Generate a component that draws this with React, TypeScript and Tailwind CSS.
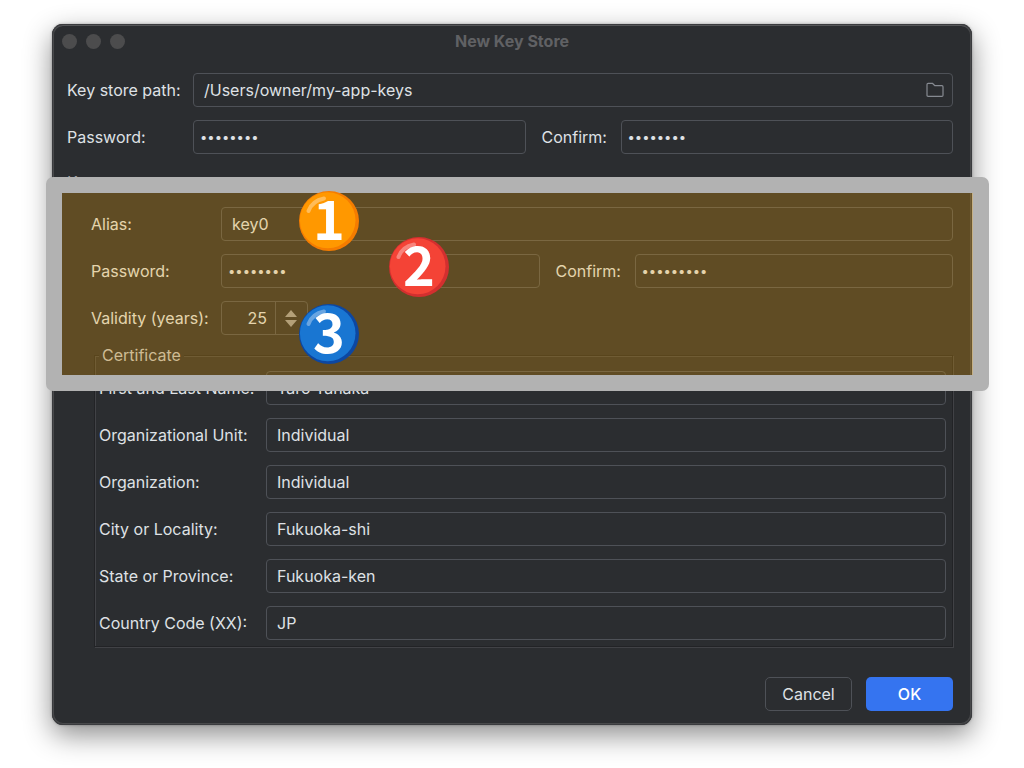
import { useId } from "react";

const inputClass =
  "h-[34px] w-full min-w-0 rounded-[4px] border border-[#4e5157] bg-transparent pl-[10px] text-base text-[#dfe1e5] outline-none";

const passwordClass =
  "h-[34px] w-full min-w-0 rounded-[4px] border border-[#4e5157] bg-transparent pl-[6px] text-[13px] text-[#dfe1e5] outline-none";

function PasswordPair({
  labelWidth,
  first,
  second,
}: {
  labelWidth: string;
  first: string;
  second: string;
}) {
  const id = useId();
  return (
    <div className="flex items-center">
      <label htmlFor={`${id}-password`} className={`shrink-0 ${labelWidth}`}>
        Password:
      </label>
      <div className="min-w-0 flex-1">
        <input id={`${id}-password`} type="password" defaultValue={first} className={passwordClass} />
      </div>
      <label htmlFor={`${id}-confirm`} className="ml-4 w-[79px] shrink-0">
        Confirm:
      </label>
      <div className="min-w-0 flex-1">
        <input id={`${id}-confirm`} type="password" defaultValue={second} className={passwordClass} />
      </div>
    </div>
  );
}

function Field({ label, value, labelWidth }: { label: string; value: string; labelWidth: string }) {
  const id = useId();
  return (
    <div className="flex items-center">
      <label htmlFor={id} className={`shrink-0 whitespace-nowrap ${labelWidth}`}>
        {label}
      </label>
      <input id={id} type="text" defaultValue={value} className={inputClass} />
    </div>
  );
}

function Badge({
  digit,
  place,
  rim,
  face,
}: {
  digit: string;
  place: string;
  rim: string;
  face: string;
}) {
  return (
    <div className={`absolute size-[60px] ${place}`}>
      <svg viewBox="0 0 60 60" className="absolute inset-0 size-full" aria-hidden="true">
        <circle cx="30" cy="30" r="30" fill={rim} />
        <ellipse cx="28.7" cy="29.3" rx="27.8" ry="28" fill={face} />
        <path d="M9.5 20C12 13 17.5 9 25 7.5" fill="none" stroke="#fff" strokeOpacity="0.35" strokeWidth="4" strokeLinecap="round" />
      </svg>
      <span className="relative flex size-full items-center justify-center pb-2 font-['Noto_Sans_CJK_JP',sans-serif] text-[54px] leading-none font-bold text-white">
        {digit}
      </span>
    </div>
  );
}

const certificate = [
  ["First and Last Name:", "Taro Tanaka"],
  ["Organizational Unit:", "Individual"],
  ["Organization:", "Individual"],
  ["City or Locality:", "Fukuoka-shi"],
  ["State or Province:", "Fukuoka-ken"],
  ["Country Code (XX):", "JP"],
];

export default function App() {
  return (
    <div className="min-h-screen bg-white px-[52px] pt-6 pb-[43px] font-['Inter',sans-serif] text-base leading-5 text-[#dfe1e5]">
      <div
        role="dialog"
        aria-labelledby="dialog-title"
        className="relative rounded-[11px] bg-[#2b2d30] shadow-[inset_0_0_0_1px_#3a3b3e,inset_0_2px_0_0_#555658,inset_0_0_0_2px_#48494b,0_10px_28px_rgba(0,0,0,0.45),0_0_3px_rgba(0,0,0,0.3)]"
      >
        <header className="relative flex h-[34px] items-center justify-center">
          <div className="absolute left-[10px] flex gap-[9px]">
            <span className="size-[15px] rounded-full bg-[#4c4c4d]" />
            <span className="size-[15px] rounded-full bg-[#4c4c4d]" />
            <span className="size-[15px] rounded-full bg-[#4c4c4d]" />
          </div>
          <h1 id="dialog-title" className="text-base font-bold text-[#606164]">
            New Key Store
          </h1>
        </header>

        <form className="pt-[15px] pr-[19px] pb-[14px] pl-[15px]" onSubmit={(e) => e.preventDefault()}>
          <div className="flex flex-col gap-[13px]">
            <div className="relative">
              <Field label="Key store path:" value="/Users/owner/my-app-keys" labelWidth="w-[126px]" />
              <button type="button" aria-label="Browse" className="absolute top-2 right-[9px]">
                <svg width="18" height="18" viewBox="0 0 18 18" fill="none" stroke="#868a91" strokeWidth="1.2" strokeLinejoin="round">
                  <path d="M1 3.4Q1 2.3 2.1 2.3H6.4L8.9 4.7H15.9Q17 4.7 17 5.8V14.2Q17 15.3 15.9 15.3H2.1Q1 15.3 1 14.2Z" />
                </svg>
              </button>
            </div>
            <PasswordPair labelWidth="w-[126px]" first="password" second="password" />
          </div>

          <h2 className="mt-[18px] text-[#a0a2a6]">Key</h2>

          <div className="mt-[15px] flex flex-col gap-[13px] pl-6">
            <Field label="Alias:" value="key0" labelWidth="w-[130px]" />
            <PasswordPair labelWidth="w-[130px]" first="password" second="passwords" />
            <div className="flex items-center">
              <label htmlFor="validity" className="w-[130px] shrink-0 whitespace-nowrap">
                Validity (years):
              </label>
              <div className="flex h-[34px] w-[87px] rounded-[4px] border border-[#4e5157]">
                <input
                  id="validity"
                  type="text"
                  inputMode="numeric"
                  defaultValue="25"
                  className="w-[54px] border-r border-[#4e5157] bg-transparent pr-2 text-right outline-none"
                />
                <div className="flex flex-1 flex-col items-center justify-center gap-[3px] pr-[2px]">
                  <button type="button" aria-label="Increase">
                    <svg width="12" height="7" viewBox="0 0 12 7" className="block" fill="#9b9da1">
                      <path d="M6 0L12 7H0Z" />
                    </svg>
                  </button>
                  <button type="button" aria-label="Decrease">
                    <svg width="12" height="7" viewBox="0 0 12 7" className="block" fill="#9b9da1">
                      <path d="M0 0H12L6 7Z" />
                    </svg>
                  </button>
                </div>
              </div>
            </div>
          </div>

          <fieldset className="mt-[10px] ml-[27px] min-w-0 border border-[#222326] pr-[6px] pb-[6px] pl-1 shadow-[1px_1px_0_0_#414246,inset_1px_1px_0_0_#414246]">
            <legend className="bg-[#2b2d30] px-[3px] text-[#bfc1c5]">Certificate</legend>
            <div className="flex flex-col gap-[13px] pt-[6px]">
              {certificate.map(([label, value]) => (
                <Field key={label} label={label} value={value} labelWidth="w-[167px]" />
              ))}
            </div>
          </fieldset>

          <div className="mt-[30px] flex justify-end gap-[14px]">
            <button type="button" className="h-[34px] w-[87px] rounded-[5px] border border-[#4e5157]">
              Cancel
            </button>
            <button type="submit" className="h-[34px] w-[87px] rounded-[5px] bg-[#3574f0] font-medium text-white">
              OK
            </button>
          </div>
        </form>

        <div className="pointer-events-none absolute top-[153px] -right-[17px] -left-[6px] h-[214px] rounded-[7px] border-16 border-[#b2b2b2] bg-[#ffaa00]/25 bg-clip-padding">
          <Badge digit="1" place="top-[-2px] left-[237px]" rim="#f57c00" face="#ff9800" />
          <Badge digit="2" place="top-[44px] left-[327px]" rim="#d32f2f" face="#f44336" />
          <Badge digit="3" place="top-[111px] left-[237px]" rim="#0d47a1" face="#1976d2" />
        </div>
      </div>
    </div>
  );
}
